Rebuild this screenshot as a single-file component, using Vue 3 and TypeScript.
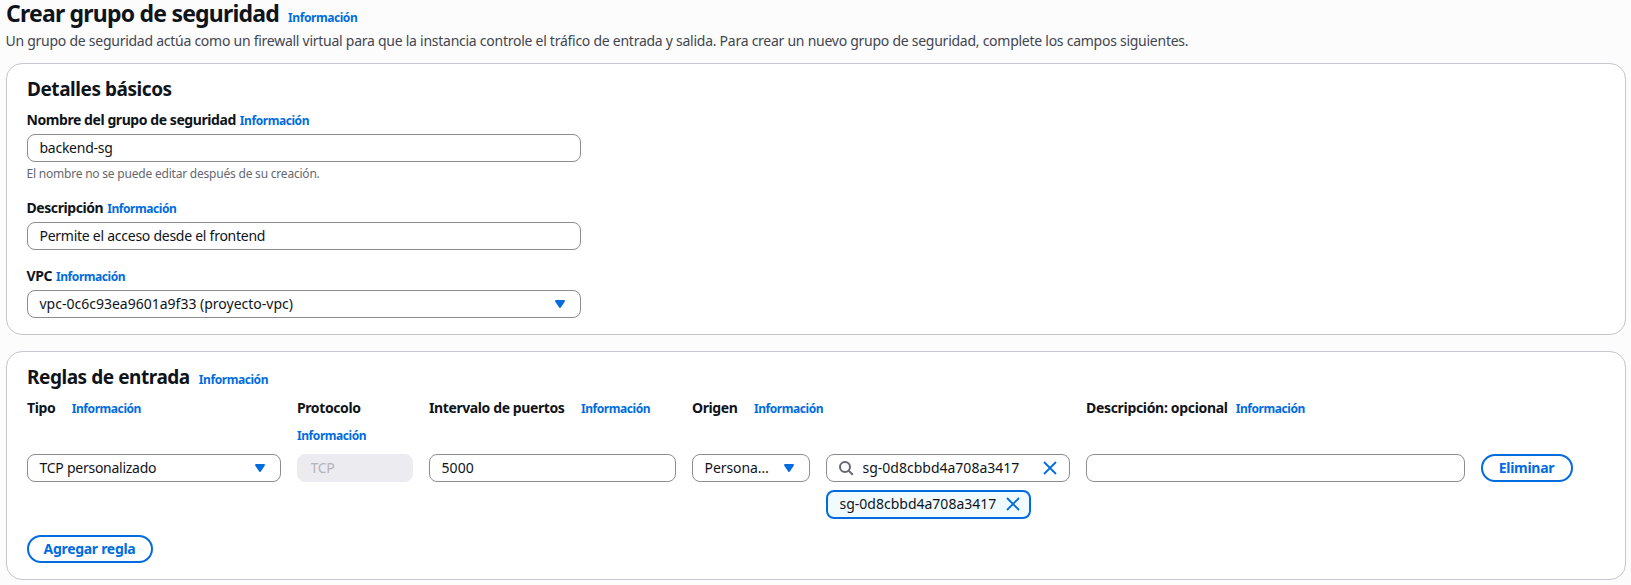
<script setup lang="ts">
import { ref } from 'vue'

const groupName = ref('backend-sg')
const description = ref('Permite el acceso desde el frontend')
const vpc = ref('vpc-0c6c93ea9601a9f33 (proyecto-vpc)')

const rule = ref({
  type: 'TCP personalizado',
  protocol: 'TCP',
  ports: '5000',
  sourceKind: 'Persona…',
  sourceQuery: 'sg-0d8cbbd4a708a3417',
  description: '',
})
const tokens = ref<string[]>(['sg-0d8cbbd4a708a3417'])

const removeToken = (token: string): void => {
  tokens.value = tokens.value.filter((t) => t !== token)
}
</script>

<template>
  <main class="page">
    <header class="page-header">
      <h1>Crear grupo de seguridad</h1>
      <a class="info">Información</a>
    </header>
    <p class="intro">
      Un grupo de seguridad actúa como un firewall virtual para que la instancia controle el tráfico de entrada y
      salida. Para crear un nuevo grupo de seguridad, complete los campos siguientes.
    </p>

    <section class="panel basics">
      <div class="panel-header">
        <h2>Detalles básicos</h2>
      </div>

      <div class="field">
        <div class="label-row"><label class="label">Nombre del grupo de seguridad</label><a class="info">Información</a></div>
        <input v-model="groupName" class="control" type="text" />
        <p class="hint">El nombre no se puede editar después de su creación.</p>
      </div>

      <div class="field">
        <div class="label-row"><label class="label">Descripción</label><a class="info">Información</a></div>
        <input v-model="description" class="control" type="text" />
      </div>

      <div class="field">
        <div class="label-row"><label class="label">VPC</label><a class="info">Información</a></div>
        <button class="control select" type="button">
          <span class="code">{{ vpc }}</span>
          <svg class="icon" viewBox="0 0 16 16"><path class="caret" d="M4 5h8l-4 6z" /></svg>
        </button>
      </div>
    </section>

    <section class="panel rules">
      <div class="panel-header">
        <h2>Reglas de entrada</h2>
        <a class="info">Información</a>
      </div>

      <div class="rule-grid">
        <div class="head"><span class="label">Tipo</span><a class="info">Información</a></div>
        <div class="head"><span class="label">Protocolo</span><a class="info">Información</a></div>
        <div class="head"><span class="label">Intervalo de puertos</span><a class="info">Información</a></div>
        <div class="head"><span class="label">Origen</span><a class="info">Información</a></div>
        <div class="head narrow"><span class="label">Descripción: opcional</span><a class="info">Información</a></div>
        <div class="head"></div>

        <button class="control select" type="button">
          <span>{{ rule.type }}</span>
          <svg class="icon" viewBox="0 0 16 16"><path class="caret" d="M4 5h8l-4 6z" /></svg>
        </button>
        <input v-model="rule.protocol" class="control" type="text" disabled />
        <input v-model="rule.ports" class="control digits" type="text" />
        <div class="source">
          <button class="control select kind" type="button">
            <span class="kind-text">{{ rule.sourceKind }}</span>
            <svg class="icon" viewBox="0 0 16 16"><path class="caret" d="M4 5h8l-4 6z" /></svg>
          </button>
          <div class="source-values">
            <div class="control search">
              <svg class="icon lens" viewBox="0 0 16 16">
                <circle cx="7" cy="7" r="5" />
                <path d="m10.6 10.6 4.2 4.2" />
              </svg>
              <input v-model="rule.sourceQuery" class="query code" type="text" />
              <svg class="icon cross" viewBox="0 0 16 16"><path d="m2 2 12 12M14 2 2 14" /></svg>
            </div>
            <div v-for="token in tokens" :key="token" class="token">
              <span class="code">{{ token }}</span>
              <svg class="icon cross" viewBox="0 0 16 16" @click="removeToken(token)">
                <path d="m2 2 12 12M14 2 2 14" />
              </svg>
            </div>
          </div>
        </div>
        <input v-model="rule.description" class="control" type="text" />
        <button class="pill remove" type="button">Eliminar</button>
      </div>

      <button class="pill add" type="button">Agregar regla</button>
    </section>
  </main>
</template>

<style>
html,
body {
  margin: 0;
  background: #fcfcfd;
}
</style>

<style scoped>
.page,
.page * {
  box-sizing: border-box;
}

.page {
  width: 1631px;
  height: 585px;
  padding: 0 5px 0 6px;
  background: #fcfcfd;
  color: #0f141a;
  font-family: 'Noto Sans', 'Open Sans', sans-serif;
  font-size: 14px;
  line-height: 20px;
  letter-spacing: -0.26px;
}

h1,
h2,
p {
  margin: 0;
}

.page-header,
.panel-header {
  display: flex;
  align-items: baseline;
  gap: 9px;
}

.page-header {
  height: 26px;
}

h1 {
  font-size: 23px;
  line-height: 26px;
  font-weight: 700;
  letter-spacing: -0.79px;
}

h2 {
  font-size: 19px;
  line-height: 24px;
  font-weight: 700;
  letter-spacing: -0.45px;
}

.info {
  color: #006ce0;
  font-size: 12px;
  line-height: 20px;
  font-weight: 700;
  letter-spacing: -0.43px;
  cursor: pointer;
}

.intro {
  margin-top: 5px;
  margin-left: -0.5px;
  color: #424650;
  white-space: nowrap;
}

.panel {
  border: 1px solid #c6c6cd;
  border-radius: 16px;
  background: #fff;
  padding: 13px 20px 16px;
}

.basics {
  height: 272px;
  margin-top: 12px;
}

.rules {
  height: 229px;
  margin-top: 16px;
}

.panel-header {
  height: 24px;
  margin-bottom: 9px;
}

.field {
  width: 554px;
  margin-bottom: 16px;
}

.label-row {
  display: flex;
  align-items: baseline;
  gap: 4px;
  height: 20px;
  margin-bottom: 4px;
}

.label {
  margin-left: -0.5px;
  font-weight: 700;
  letter-spacing: -0.43px;
}

.hint {
  margin-top: 4px;
  margin-left: -0.5px;
  color: #656871;
  font-size: 12px;
  line-height: 16px;
  letter-spacing: -0.21px;
}

.control {
  display: block;
  width: 100%;
  height: 28px;
  margin: 0;
  padding: 0 12px 2px 11.5px;
  border: 1px solid #8c8c94;
  border-radius: 8px;
  outline: none;
  background: #fff;
  color: #0f141a;
  font: inherit;
  letter-spacing: inherit;
}

.control:disabled {
  padding-left: 12.5px;
  border-color: #ebebf0;
  background: #ebebf0;
  color: #b4b4bb;
}

.control.digits {
  letter-spacing: 0.1px;
}

.code {
  letter-spacing: 0;
}

.control.select {
  display: flex;
  align-items: center;
  justify-content: space-between;
  padding-bottom: 0;
  text-align: left;
  white-space: nowrap;
}

.icon {
  display: block;
  flex: none;
  width: 16px;
  height: 16px;
  fill: none;
}

.caret {
  fill: #006ce0;
  stroke: #006ce0;
  stroke-width: 2;
  stroke-linejoin: round;
}

.lens {
  stroke: #656871;
  stroke-width: 2;
}

.cross {
  stroke: #006ce0;
  stroke-width: 1.8;
}

.rule-grid {
  display: grid;
  grid-template-columns: 254px 116px 247px 378px 379px 92px;
  column-gap: 16px;
  row-gap: 8px;
  align-items: start;
}

.head {
  display: flex;
  flex-wrap: wrap;
  align-content: flex-start;
  align-items: baseline;
  column-gap: 16.5px;
  row-gap: 8px;
  min-height: 48px;
}

.head .label {
  margin-left: 0;
  letter-spacing: -0.4px;
}

.head.narrow {
  column-gap: 8px;
}

.head.narrow .label {
  letter-spacing: -0.32px;
}

.source {
  display: grid;
  grid-template-columns: 118px 244px;
  column-gap: 16px;
}

.kind-text {
  letter-spacing: -0.08px;
}

.control.search {
  display: flex;
  align-items: center;
  padding: 0 11px;
}

.query {
  flex: 1;
  min-width: 0;
  height: 22px;
  margin-left: 8.5px;
  padding: 0 0 2px;
  border: 0;
  outline: none;
  background: transparent;
  color: inherit;
  font: inherit;
}

.token {
  display: flex;
  align-items: center;
  justify-content: space-between;
  width: 205px;
  height: 29px;
  margin-top: 8px;
  padding: 0 8px 1px 11.5px;
  border: 2px solid #006ce0;
  border-radius: 8px;
  background: #f0fbff;
}

.pill {
  height: 28px;
  padding: 0 1px 0 0;
  border: 2px solid #006ce0;
  border-radius: 14px;
  background: #fff;
  color: #006ce0;
  font: inherit;
  font-weight: 700;
  letter-spacing: -0.3px;
  text-align: center;
}

.remove {
  width: 92px;
}

.add {
  display: block;
  width: 126px;
  margin-top: 16px;
}
</style>
